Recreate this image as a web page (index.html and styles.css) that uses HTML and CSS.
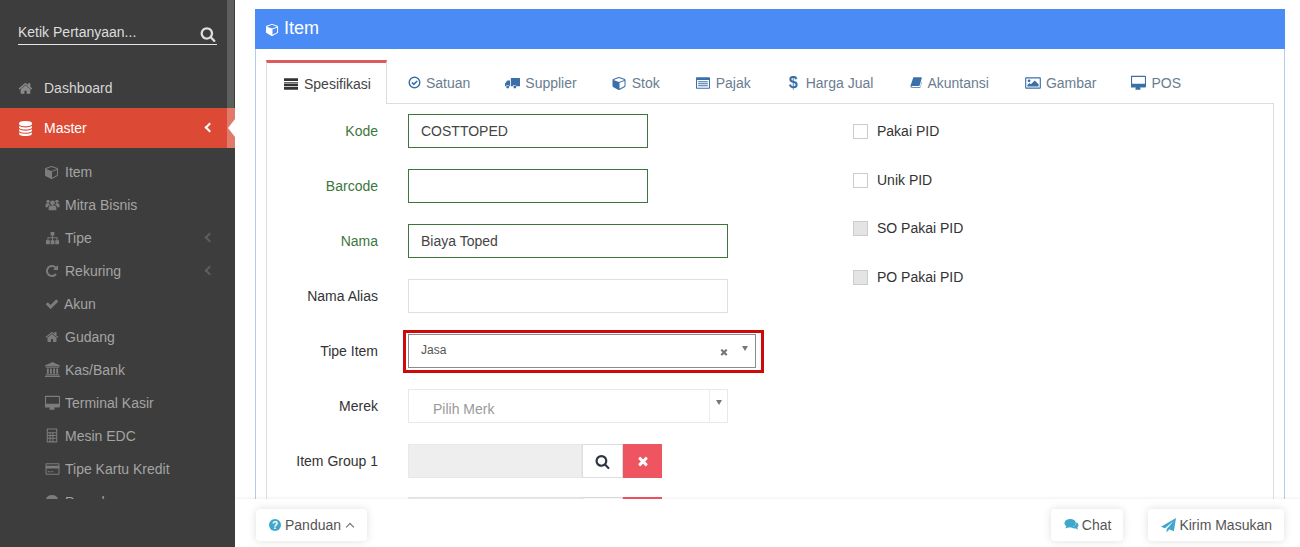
FILE: index.html
```html
<!DOCTYPE html>
<html lang="id">
<head>
<meta charset="utf-8">
<title>Item</title>
<link rel="stylesheet" href="styles.css">
</head>
<body>
<svg class="sprite" xmlns="http://www.w3.org/2000/svg">
  <symbol id="i-search" viewBox="0 0 1792 1792"><path d="M1216 832q0-185-131.500-316.500t-316.500-131.500-316.500 131.500-131.500 316.500 131.500 316.500 316.500 131.500 316.500-131.500 131.500-316.500zm512 832q0 52-38 90t-90 38q-54 0-90-38l-343-342q-179 124-399 124-143 0-273.500-55.500t-225-150-150-225-55.500-273.500 55.500-273.500 150-225 225-150 273.500-55.500 273.500 55.500 225 150 150 225 55.500 273.500q0 220-124 399l343 343q37 37 37 90z"/></symbol>
  <symbol id="i-home" viewBox="0 0 1792 1792"><path d="M1472 992v480q0 26-19 45t-45 19h-384v-384h-256v384h-384q-26 0-45-19t-19-45v-480q0-1 .5-3t.5-3l575-474 575 474q1 2 1 6zm223-69l-62 74q-8 9-21 11h-3q-13 0-21-7l-692-577-692 577q-12 8-24 7-13-2-21-11l-62-74q-8-10-7-23.500t11-21.500l719-599q32-26 76-26t76 26l244 204v-195q0-14 9-23t23-9h192q14 0 23 9t9 23v408l219 182q10 8 11 21.500t-7 23.500z"/></symbol>
  <symbol id="i-db" viewBox="0 0 1792 1792"><path d="M896 768q237 0 443-43t325-127v170q0 69-103 128t-280 93.500-385 34.500-385-34.500-280-93.500-103-128v-170q119 84 325 127t443 43zm0 768q237 0 443-43t325-127v170q0 69-103 128t-280 93.500-385 34.500-385-34.500-280-93.500-103-128v-170q119 84 325 127t443 43zm0-384q237 0 443-43t325-127v170q0 69-103 128t-280 93.500-385 34.500-385-34.500-280-93.500-103-128v-170q119 84 325 127t443 43zm0-1152q208 0 385 34.500t280 93.500 103 128v128q0 69-103 128t-280 93.500-385 34.500-385-34.500-280-93.500-103-128v-128q0-69 103-128t280-93.500 385-34.500z"/></symbol>
  <symbol id="i-cube" viewBox="0 0 1792 1792"><path d="M896 1629l640-349v-636l-640 233v752zm-64-865l698-254-698-254-698 254zm832-252v768q0 35-18 65t-49 47l-704 384q-28 16-61 16t-61-16l-704-384q-31-17-49-47t-18-65v-768q0-40 23-73t61-47l704-256q22-8 44-8t44 8l704 256q38 14 61 47t23 73z"/></symbol>
  <symbol id="i-check" viewBox="0 0 1792 1792"><path d="M1671 566q0 40-28 68l-724 724-136 136q-28 28-68 28t-68-28l-136-136-362-362q-28-28-28-68t28-68l136-136q28-28 68-28t68 28l294 295 656-657q28-28 68-28t68 28l136 136q28 28 28 68z"/></symbol>
  <symbol id="i-redo" viewBox="0 0 1792 1792"><path d="M1664 256v448q0 26-19 45t-45 19h-448q-42 0-59-40-17-39 14-69l138-138q-148-137-349-137-104 0-198.500 40.500t-163.500 109.500-109.500 163.500-40.500 198.500 40.500 198.500 109.500 163.500 163.500 109.500 198.500 40.500q119 0 225-52t179-147q7-10 23-12 15 0 25 9l137 138q9 8 9.500 20.500t-7.500 22.500q-109 132-264 204.500t-327 72.500q-156 0-298-61t-245-164-164-245-61-298 61-298 164-245 245-164 298-61q147 0 284.500 55.500t244.500 156.500l130-129q29-31 70-14 39 17 39 59z"/></symbol>
  <symbol id="i-times" viewBox="0 0 1792 1792"><path d="M1490 1322q0 40-28 68l-136 136q-28 28-68 28t-68-28l-294-294-294 294q-28 28-68 28t-68-28l-136-136q-28-28-28-68t28-68l294-294-294-294q-28-28-28-68t28-68l136-136q28-28 68-28t68 28l294 294 294-294q28-28 68-28t68 28l136 136q28 28 28 68t-28 68l-294 294 294 294q28 28 28 68z"/></symbol>
  <symbol id="i-desktop" viewBox="0 0 1792 1792"><path d="M1664 960v-768q0-13-9.500-22.500t-22.500-9.500h-1472q-13 0-22.500 9.500t-9.500 22.500v768q0 13 9.500 22.500t22.500 9.500h1472q13 0 22.500-9.500t9.500-22.500zm128-768v1088q0 66-47 113t-113 47h-544q0 37 16 77.500t32 71 16 43.500q0 26-19 45t-45 19h-512q-26 0-45-19t-19-45q0-14 16-44t32-70 16-78h-544q-66 0-113-47t-47-113v-1088q0-66 47-113t113-47h1632q66 0 113 47t47 113z" transform="translate(0 64)"/></symbol>
  <symbol id="i-users" viewBox="0 0 16 16"><circle cx="8" cy="5.500" r="2.700"/><path d="M3.600 14v-2.600q0-2.900 2.800-2.900h3.200q2.800 0 2.800 2.900V14z"/><circle cx="2.900" cy="3.800" r="1.900"/><circle cx="13.100" cy="3.800" r="1.900"/><path d="M0 10.500V8q0-2 2-2h2q.2 1.300 1.200 2-2.400.6-2.700 2.500zM16 10.500V8q0-2-2-2h-2q-.2 1.300-1.200 2 2.400.6 2.700 2.500z"/></symbol>
  <symbol id="i-sitemap" viewBox="0 0 16 16"><path d="M5.800 1h4.400v4H8.600v2h5.200v3.500h1.700V15h-4.400v-4.500h1.500V8.200H8.600v2.300h1.600V15H5.800v-4.500h1.600V8.200H3.400v2.300h1.500V15H.5v-4.500h1.700V7h5.200V5H5.800z"/></symbol>
  <symbol id="i-bank" viewBox="0 0 16 16"><path d="M8 0l8 3.600v1.200H0V3.600zM1 5.500h14v.9H1zM2 7h2v5.500H2zM5.300 7h2v5.500h-2zM8.700 7h2v5.500h-2zM12 7h2v5.500h-2zM1 13h14v1.200H1zM0 14.600h16V16H0z"/></symbol>
  <symbol id="i-calc" viewBox="0 0 16 16"><path fill-rule="evenodd" d="M2 0h12v16H2zM3.200 1.200v3h9.600v-3zM3.200 5.400v2h2v-2zM6.400 5.400v2h2v-2zM9.600 5.400v2h3.200v-2zM3.200 8.600v2h2v-2zM6.400 8.600v2h2v-2zM9.600 8.600v2h3.200v-2zM3.200 11.800v2.800h2v-2.800zM6.400 11.800v2.800h2v-2.800zM9.600 11.800v2.800h3.200v-2.800z"/></symbol>
  <symbol id="i-card" viewBox="0 0 16 16"><path fill-rule="evenodd" d="M1 1.500h14q1 0 1 1v11q0 1-1 1H1q-1 0-1-1v-11q0-1 1-1zM1.200 2.700v1.500h13.600V2.700zM1.200 7.500v5.800h13.600V7.500z"/><path d="M2.500 10.500h3v1.300h-3zM6.500 10.500h2.500v1.300H6.500z"/></symbol>
  <symbol id="i-case" viewBox="0 0 16 16"><path d="M8 0q7 0 7.500 8H.5Q1 0 8 0zM1 9h14v7H1z"/></symbol>
  <symbol id="i-bars" viewBox="0 0 16 16"><path d="M0 1.500h16v3.200H0zM0 5.600h16v.9H0zM0 7.300h16v3H0zM0 11.200h16v3.300H0z"/></symbol>
  <symbol id="i-circlecheck" viewBox="0 0 16 16"><circle cx="8" cy="8" r="6.500" fill="none" stroke="currentColor" stroke-width="1.800"/><path d="M4.800 8l2.300 2.300 4.200-4.200" fill="none" stroke="currentColor" stroke-width="2"/></symbol>
  <symbol id="i-truck" viewBox="0 0 18 16"><path d="M7 2h10.500q.5 0 .5.500V12h-4.500a2.300 2.300 0 0 0-4.400 0H7zM0 12V8.500L2.800 5H6v7H5.400a2.300 2.300 0 0 0-4.400 0z"/><circle cx="3.200" cy="12.800" r="1.700"/><circle cx="11.800" cy="12.800" r="1.700"/></symbol>
  <symbol id="i-listalt" viewBox="0 0 16 16"><path fill-rule="evenodd" d="M.8 1.500h14.400q.8 0 .8.800v11.400q0 .8-.8.800H.8q-.8 0-.8-.8V2.300q0-.8.800-.8zM1.200 4.500v8.800h13.600V4.500z"/><path d="M2.500 6h11v1.200h-11zM2.500 8.300h11v1.200h-11zM2.500 10.600h11v1.200h-11z"/></symbol>
  <symbol id="i-book" viewBox="0 0 16 16"><path d="M4.500 1H15q1 0 .7 1l-2.700 9.500q-.3 1-1.300 1H3q-1 0-1 .8T3 14h10.500l2-6.800.5.600-2.300 7.200H2.600Q.3 15 .6 12.300z"/></symbol>
  <symbol id="i-picture" viewBox="0 0 18 16"><path fill-rule="evenodd" d="M1 1.500h16q1 0 1 1v11q0 1-1 1H1q-1 0-1-1v-11q0-1 1-1zM1.300 2.800v10.400h15.400V2.800z"/><circle cx="4.500" cy="5.500" r="1.600"/><path d="M2.600 12v-1.800L5 8l1.500 1.500L11 5l4.400 4.300V12z"/></symbol>
  <symbol id="i-plane" viewBox="0 0 16 16"><path d="M16 0L13.700 14 8.800 12 6 15.500V12L13.500 3.300 4.300 11 0 9.200z"/></symbol>
  <symbol id="i-comments" viewBox="0 0 16 16"><ellipse cx="6.500" cy="6" rx="6.500" ry="4.800"/><path d="M2 9l-1 3 4-1.500z"/><path d="M13.800 4.800q2.200 1.300 2.200 3.400 0 1.700-1.400 2.800l.9 2.500-3.200-1.700q-3 .4-5-1.200 5.600-.3 6.500-5.800z"/></symbol>
</svg>

<div class="app">
  <aside class="sidebar">
    <div class="scroll-thumb"></div>
    <div class="search">
      <span>Ketik Pertanyaan...</span>
      <svg class="search-ico" width="16" height="16"><use href="#i-search"/></svg>
    </div>
    <nav class="nav">
      <a class="nav-top"><svg width="15" height="15"><use href="#i-home"/></svg>Dashboard</a>
      <a class="nav-top nav-active"><svg width="15" height="15"><use href="#i-db"/></svg>Master<i class="chev chev-white"></i></a>
      <ul class="sub">
        <li><svg width="14" height="14"><use href="#i-cube"/></svg>Item</li>
        <li><svg class="wide" width="15" height="14"><use href="#i-users"/></svg>Mitra Bisnis</li>
        <li><svg class="wide" width="15" height="14"><use href="#i-sitemap"/></svg>Tipe<i class="chev"></i></li>
        <li><svg width="14" height="14"><use href="#i-redo"/></svg>Rekuring<i class="chev"></i></li>
        <li class="tight"><svg width="14" height="14"><use href="#i-check"/></svg>Akun</li>
        <li><svg width="14" height="14"><use href="#i-home"/></svg>Gudang</li>
        <li><svg class="wide" width="15" height="15"><use href="#i-bank"/></svg>Kas/Bank</li>
        <li><svg class="wide" width="15" height="15"><use href="#i-desktop"/></svg>Terminal Kasir</li>
        <li><svg width="14" height="15"><use href="#i-calc"/></svg>Mesin EDC</li>
        <li><svg class="wide" width="15" height="14"><use href="#i-card"/></svg>Tipe Kartu Kredit</li>
        <li><svg width="14" height="14"><use href="#i-case"/></svg>Proyek</li>
      </ul>
    </nav>
  </aside>

  <main class="main">
    <section class="panel">
      <header class="panel-head"><svg width="13" height="13"><use href="#i-cube"/></svg>Item</header>
      <div class="panel-body">
        <div class="tabs">
          <a class="tab tab-active"><svg width="14" height="14"><use href="#i-bars"/></svg>Spesifikasi</a>
          <a class="tab"><svg width="13" height="13"><use href="#i-circlecheck"/></svg>Satuan</a>
          <a class="tab"><svg width="15" height="14"><use href="#i-truck"/></svg>Supplier</a>
          <a class="tab"><svg width="15" height="14"><use href="#i-cube"/></svg>Stok</a>
          <a class="tab"><svg width="16" height="14"><use href="#i-listalt"/></svg>Pajak</a>
          <a class="tab tab-dollar"><b class="dollar">$</b>Harga Jual</a>
          <a class="tab tab-book"><svg width="12" height="13"><use href="#i-book"/></svg>Akuntansi</a>
          <a class="tab"><svg width="16" height="14"><use href="#i-picture"/></svg>Gambar</a>
          <a class="tab"><svg width="15" height="15"><use href="#i-desktop"/></svg>POS</a>
        </div>
        <div class="tab-content">
          <div class="form-left">
            <div class="row row-ok"><label>Kode</label><div class="field w240">COSTTOPED</div></div>
            <div class="row row-ok"><label>Barcode</label><div class="field w240"></div></div>
            <div class="row row-ok"><label>Nama</label><div class="field w320">Biaya Toped</div></div>
            <div class="row"><label>Nama Alias</label><div class="field w320"></div></div>
            <div class="row">
              <label>Tipe Item</label>
              <div class="select select-tipe">
                <span>Jasa</span>
                <svg class="clear" width="10" height="10"><use href="#i-times"/></svg>
                <i class="caret"></i>
                <div class="annot"></div>
              </div>
            </div>
            <div class="row">
              <label>Merek</label>
              <div class="select-merek">
                <span>Pilih Merk</span>
                <i class="caret"></i>
              </div>
            </div>
            <div class="row row-group">
              <label>Item Group 1</label>
              <div class="lookup"><div class="lookup-val"></div><button class="btn-find"><svg width="15" height="15"><use href="#i-search"/></svg></button><button class="btn-del"><svg width="14" height="14"><use href="#i-times"/></svg></button></div>
            </div>
            <div class="row">
              <label></label>
              <div class="lookup"><div class="lookup-val"></div><button class="btn-find"><svg width="15" height="15"><use href="#i-search"/></svg></button><button class="btn-del"><svg width="14" height="14"><use href="#i-times"/></svg></button></div>
            </div>
          </div>
          <div class="form-right">
            <div class="check"><i class="box"></i>Pakai PID</div>
            <div class="check"><i class="box"></i>Unik PID</div>
            <div class="check"><i class="box box-off"></i>SO Pakai PID</div>
            <div class="check"><i class="box box-off"></i>PO Pakai PID</div>
          </div>
        </div>
      </div>
    </section>

    <footer class="footer">
      <a class="pill"><span class="q">?</span>Panduan<i class="up"></i></a>
      <div class="footer-right">
        <a class="pill"><svg width="15" height="14"><use href="#i-comments"/></svg>Chat</a>
        <a class="pill"><svg width="15" height="15"><use href="#i-plane"/></svg>Kirim Masukan</a>
      </div>
    </footer>
  </main>
</div>
</body>
</html>
```

FILE: styles.css
```css
* { box-sizing: border-box; }
html, body { margin: 0; height: 547px; overflow: hidden; background: #fff; }
body { font-family: "Liberation Sans", Arial, sans-serif; font-size: 14px; color: #333; }
.sprite { display: none; }
svg { fill: currentColor; flex: none; }
a { display: flex; align-items: center; }

.app { display: flex; height: 547px; }

/* sidebar */
.sidebar { position: relative; width: 235px; flex: none; background: #3d3d3d; padding-top: 22px; }
.scroll-thumb { position: absolute; top: 0; left: 227px; width: 7px; height: 108px; background: #5c5f5c; }
.search { display: flex; align-items: center; justify-content: space-between; height: 23px; margin: 0 18px; padding: 1px 1px 3px 0; border-bottom: 1px solid #e6e6e6; color: #ddd; }
.search-ico { margin-top: 4px; color: #ddd; }
.nav { height: 431px; margin-top: 23px; overflow: hidden; }
.nav-top { position: relative; height: 40px; padding-left: 18px; color: #d6d6d6; }
.nav-top svg { margin-right: 11px; color: #8a8a8a; }
.nav-active { background: #dc4a36; color: #fff; }
.nav-active svg { color: #fff; }
.nav-active::after { content: ""; position: absolute; left: 227px; top: 0; width: 8px; height: 40px; background: #e07a6c; }
.nav-active::before { content: ""; position: absolute; z-index: 1; left: 228px; top: 11px; border: 9px solid transparent; border-left-width: 0; border-right: 7px solid #fff; }
.chev { position: absolute; right: 22px; top: 50%; width: 7px; height: 7px; margin-top: -4px; border-left: 2px solid #5d5d5d; border-bottom: 2px solid #5d5d5d; transform: rotate(45deg); }
.chev-white { border-color: #fff; z-index: 1; }
.sub { margin: 0; padding: 7px 0 0 45px; list-style: none; color: #a4a4a4; }
.sub li { position: relative; display: flex; align-items: center; height: 33px; }
.sub li svg { margin-right: 6px; color: #7c7c7c; }
.sub li svg.wide { margin-right: 5px; }
.sub li .chev { right: 22px; }
.sub li.tight svg { margin-right: 5px; }

/* main */
.main { position: relative; flex: 1; min-width: 0; padding: 9px 15px 0 20px; overflow: hidden; }
.panel { height: 600px; border: 1px solid #b4cbee; border-top: 0; }
.panel-head { display: flex; align-items: center; height: 40px; margin: 0 -1px; padding: 0 0 2px 11px; background: #4a8bf5; color: #fff; font-size: 18px; }
.panel-head svg { margin: 2px 5px 0 0; }
.panel-body { padding: 11px 10px 0; }

/* tabs */
.tabs { display: flex; height: 44px; border-bottom: 1px solid #ddd; color: #6a7d90; }
.tab { height: 44px; padding: 1px 15px 0; margin-right: 5px; }
.tab svg { margin-right: 5px; color: #3a6fa8; }
.tab-active { height: 44px; margin-right: 6px; padding: 0 15px 0 17px; border: 1px solid #ddd; border-top: 3px solid #df5a5f; border-bottom: 0; background: #fff; color: #444; }
.tab-active svg { margin-right: 6px; color: #333; }
.tab-dollar { padding-left: 18px; margin-right: 7px; }
.tab-book { margin-right: 6px; }
.dollar { width: 17px; color: #3a6fa8; font-size: 16px; font-weight: 700; }

.tab-content { display: flex; height: 500px; padding-top: 3px; border: 1px solid #ddd; border-top: 0; }
.form-left { width: 586px; padding-top: 7px; }
.row { display: flex; align-items: center; height: 34px; margin-bottom: 21px; }
.row label { width: 111px; margin-right: 30px; text-align: right; }
.row-ok label { color: #3c763d; }
.row-group { margin-bottom: 19px; }

.field { display: flex; align-items: center; height: 34px; padding-left: 12px; border: 1px solid #e0e0e0; background: #fff; color: #444; }
.row-ok .field { border-color: #3c763d; }
.w240 { width: 240px; }
.w320 { width: 320px; }

.select { position: relative; display: flex; align-items: center; width: 348px; height: 34px; padding: 0 0 2px 12px; border: 1px solid #8c8c8c; font-size: 12px; color: #555; }
.clear { position: absolute; left: 310px; top: 12px; color: #777; }
.caret { position: absolute; width: 0; height: 0; border: 3.500px solid transparent; border-top: 5px solid #777; border-bottom: 0; }
.select .caret { left: 333px; top: 11px; }
.annot { position: absolute; left: -6px; right: -9px; top: -5px; bottom: -6px; border: 3px solid #cc0a0a; }
.select-merek { position: relative; width: 320px; height: 34px; padding: 11px 0 0 24px; border: 1px solid #e8e8e8; color: #999; }
.select-merek::after { content: ""; position: absolute; right: 17px; top: 0; bottom: 0; border-left: 1px solid #eee; }
.select-merek .caret { right: 5px; top: 10px; }

.lookup { display: flex; height: 34px; }
.lookup-val { width: 174px; background: #eee; border: 1px solid #e8e8e8; }
.lookup button { display: flex; align-items: center; justify-content: center; height: 34px; padding: 0; border: 1px solid #ddd; }
.btn-find { width: 41px; background: #fff; color: #2d3540; }
.btn-del { width: 39px; background: #ef5461; color: #fff; border-color: #ef5461 !important; }

.form-right { display: flex; flex-direction: column; }
.check { display: flex; align-items: center; height: 48.700px; padding-bottom: 1px; }
.box { width: 15px; height: 15px; margin: 1px 9px 0 0; border: 1px solid #ccc; background: #fff; }
.box-off { background: #e4e4e4; }

/* footer */
.footer { position: absolute; left: 0; right: 0; top: 499px; bottom: 0; display: flex; justify-content: space-between; align-items: flex-start; padding: 10px 16px 0 21px; background: #fff; box-shadow: 0 -1px 3px rgba(0, 0, 0, .06); }
.footer-right { display: flex; gap: 25px; }
.pill { height: 32px; padding: 0 12px 0 13px; border-radius: 4px; background: #fff; box-shadow: 0 0 8px rgba(0, 0, 0, .13); color: #555; }
.pill svg { margin-right: 3px; color: #3fa7cb; }
.q { display: flex; align-items: center; justify-content: center; width: 12px; height: 12px; margin-right: 4px; border-radius: 50%; background: #3fa7cb; color: #fff; font-size: 10px; font-weight: 700; }
.up { width: 6px; height: 6px; margin: 3px 2px 0 6px; border-left: 1px solid #666; border-top: 1px solid #666; transform: rotate(45deg); }
```
